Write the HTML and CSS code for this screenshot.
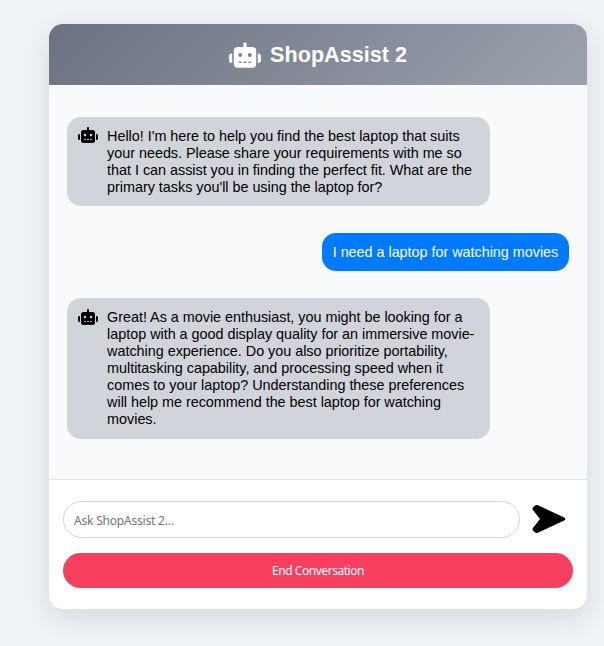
FILE: index.html
```html
<!DOCTYPE html>
<html lang="en">
<head>
<meta charset="utf-8">
<title>ShopAssist 2</title>
<link rel="stylesheet" href="styles.css">
</head>
<body>
<svg class="sprite" aria-hidden="true">
  <symbol id="robot" viewBox="0 0 640 512"><path d="M320 0c17.7 0 32 14.3 32 32V96H472c39.8 0 72 32.2 72 72V440c0 39.8-32.2 72-72 72H168c-39.8 0-72-32.2-72-72V168c0-39.8 32.2-72 72-72H288V32c0-17.7 14.3-32 32-32zM208 384c-8.8 0-16 7.2-16 16s7.2 16 16 16h32c8.8 0 16-7.2 16-16s-7.2-16-16-16H208zm96 0c-8.8 0-16 7.2-16 16s7.2 16 16 16h32c8.8 0 16-7.2 16-16s-7.2-16-16-16H304zm96 0c-8.8 0-16 7.2-16 16s7.2 16 16 16h32c8.8 0 16-7.2 16-16s-7.2-16-16-16H400zM264 256a40 40 0 1 0 -80 0 40 40 0 1 0 80 0zm152 40a40 40 0 1 0 0-80 40 40 0 1 0 0 80zM48 224H64V416H48c-26.5 0-48-21.5-48-48V272c0-26.5 21.5-48 48-48zm544 0c26.5 0 48 21.5 48 48v96c0 26.5-21.5 48-48 48H576V224h16z"/></symbol>
</svg>
<main class="chat">
  <header class="chat-header">
    <svg class="header-icon"><use href="#robot"/></svg>
    <h1>ShopAssist 2</h1>
  </header>
  <section class="messages">
    <div class="message bot">
      <svg class="bot-icon"><use href="#robot"/></svg>
      <p>Hello! I'm here to help you find the best laptop that suits your needs. Please share your requirements with me so that I can assist you in finding the perfect fit. What are the primary tasks you'll be using the laptop for?</p>
    </div>
    <div class="message user">
      <p>I need a laptop for watching movies</p>
    </div>
    <div class="message bot">
      <svg class="bot-icon"><use href="#robot"/></svg>
      <p>Great! As a movie enthusiast, you might be looking for a laptop with a good display quality for an immersive movie-watching experience. Do you also prioritize portability, multitasking capability, and processing speed when it comes to your laptop? Understanding these preferences will help me recommend the best laptop for watching movies.</p>
    </div>
  </section>
  <footer class="composer">
    <form class="ask">
      <input type="text" placeholder="Ask ShopAssist 2...">
      <button class="send" type="button" aria-label="Send">
        <svg viewBox="0 0 34 30"><path d="M5.9 1.2 32.2 13.5Q34.4 15 32.2 16.4L5.9 28.7Q4.4 29.3 3.2 28.4L1.1 26.6Q0 25.3.9 23.9L8 15 .9 6Q0 4.600 1.100 3.300L3.200 1.500Q4.400.6 5.900 1.200Z"/></svg>
      </button>
    </form>
    <button class="end" type="button">End Conversation</button>
  </footer>
</main>
</body>
</html>
```

FILE: styles.css
```css
* { box-sizing: border-box; }

body {
  margin: 0;
  min-height: 646px;
  padding: 24px 17px 37px 49px;
  background: #eff3f8;
  font-family: "Liberation Sans", Arial, sans-serif;
  overflow: hidden;
}

.sprite { display: none; }

.chat {
  width: 538px;
  height: 585px;
  display: flex;
  flex-direction: column;
  border-radius: 14px;
  overflow: hidden;
  background: #fff;
  box-shadow: 0 9px 27px rgba(0, 0, 0, 0.1);
}

.chat-header {
  height: 61px;
  display: flex;
  align-items: center;
  justify-content: center;
  gap: 9px;
  color: #fff;
  background: linear-gradient(135deg, #6b7280, #9ca3af);
}

.chat-header h1 {
  margin: 0;
  font-size: 21.6px;
  line-height: 25px;
}

.header-icon {
  width: 32px;
  height: 26px;
  fill: currentColor;
}

.messages {
  height: 394px;
  padding: 32px 18px 0;
  display: flex;
  flex-direction: column;
  align-items: flex-start;
  gap: 27px;
  background: #f9fafc;
}

.message {
  display: flex;
  padding: 11px 10.8px 10px;
  border-radius: 14px;
  font-size: 14.4px;
  line-height: 17px;
  letter-spacing: -0.025px;
  color: #000;
}

.message p { margin: 0; }

.bot {
  width: 423px;
  gap: 9.3px;
  background: #d1d5db;
}

.bot:last-child { padding-bottom: 11px; }

.bot-icon {
  flex: none;
  width: 20px;
  height: 16px;
  margin-top: -1px;
}

.bot:last-child .bot-icon { margin-top: 0; }

.user {
  align-self: flex-end;
  color: #fff;
  background: #007bff;
}

.composer {
  flex: 1;
  padding: 21px 14px;
  border-top: 1px solid #e0e3e7;
}

.ask {
  display: flex;
  align-items: center;
  gap: 12px;
}

.ask input {
  width: 457px;
  height: 37px;
  padding: 1px 10px 0;
  border: 1px solid #d1d5db;
  border-radius: 19px;
  background: #fff;
  font: 12px "Noto Sans", sans-serif;
  letter-spacing: -0.2px;
}

.ask input::placeholder { color: #757575; }

.send {
  width: 34px;
  height: 30px;
  margin-bottom: 2px;
  padding: 0;
  border: 0;
  background: none;
}

.send svg {
  display: block;
  width: 34px;
  height: 30px;
}

.end {
  display: block;
  width: 100%;
  height: 35px;
  margin-top: 15px;
  border: 0;
  border-radius: 18px;
  color: #fff;
  background: #f73f5f;
  font: 12px "Noto Sans", sans-serif;
  letter-spacing: -0.45px;
}
```
